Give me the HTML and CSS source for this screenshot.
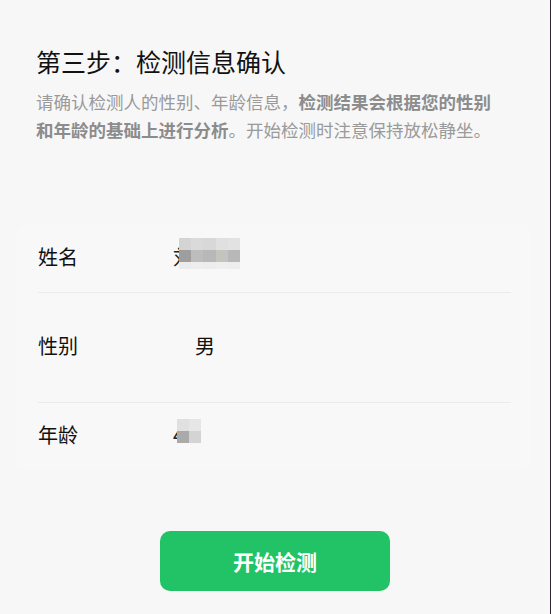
FILE: index.html
```html
<!DOCTYPE html>
<html lang="zh-CN">
<head>
<meta charset="utf-8">
<title>检测信息确认</title>
<link rel="stylesheet" href="styles.css">
</head>
<body>
<div class="page">
  <header class="intro">
    <h1 class="title">第三步：检测信息确认</h1>
    <p class="desc">请确认检测人的性别、年龄信息，<b class="strong">检测结果会根据您的性别</b><b class="strong">和年龄的基础上进行分析</b>。开始检测时注意保持放松静坐。</p>
  </header>

  <section class="card">
    <div class="row">
      <span class="label">姓名</span>
      <span class="value masked">刘<span class="mosaic mosaic-name">
        <i style="background:#d4d4d4"></i><i style="background:#dadada"></i><i style="background:#d8d8d8"></i><i style="background:#e0e0e0"></i><i style="background:#e2e2e2"></i>
        <i style="background:#9e9e9e"></i><i style="background:#bdbdbd"></i><i style="background:#b6b8ba"></i><i style="background:#c4c4bf"></i><i style="background:#b8b8b8"></i>
        <i style="background:#ececec"></i><i style="background:#eeeeee"></i><i style="background:#ededed"></i><i style="background:#efefef"></i><i style="background:#eeeeee"></i>
      </span></span>
    </div>
    <div class="row row-tall">
      <span class="label">性别</span>
      <span class="value gender">男</span>
    </div>
    <div class="row">
      <span class="label">年龄</span>
      <span class="value masked">4<span class="mosaic mosaic-age">
        <i style="background:#e0e0e0"></i><i style="background:#e6e6e6"></i>
        <i style="background:#aaaaaa"></i><i style="background:#d4d4d4"></i>
      </span></span>
    </div>
  </section>

  <div class="actions">
    <button class="start-btn" type="button">开始检测</button>
  </div>
</div>
</body>
</html>
```

FILE: styles.css
```css
html {
  background: #2e2430;
}
body {
  margin: 0;
  width: 550px;
  min-height: 614px;
  background: #f7f7f7;
  font-family: "Noto Sans CJK SC", "Noto Sans", sans-serif;
  color: #111;
}
.page {
  display: flex;
  flex-direction: column;
  padding: 44px 0 0;
}
.intro {
  padding: 0 36px;
}
.title {
  margin: 0;
  font-size: 25px;
  line-height: 35px;
  font-weight: 400;
  color: #111;
}
.desc {
  margin: 9px 0 0;
  max-width: 462px;
  font-size: 17.5px;
  line-height: 27.5px;
  color: #9a9a9a;
}
.strong {
  font-weight: 700;
  color: #8c8c8c;
}
.card {
  margin: 81px 20px 0 17px;
  background: #f8f8f8;
  border-radius: 10px;
  padding: 0 19px 0 21px;
  display: flex;
  flex-direction: column;
}
.row {
  display: flex;
  align-items: center;
  box-sizing: border-box;
  height: 68px;
  padding-bottom: 4px;
  font-size: 20px;
  color: #111;
}
.row + .row {
  border-top: 1px solid #ebebeb;
}
.row-tall {
  height: 110px;
}
.label {
  width: 135px;
  flex: none;
}
.value {
  position: relative;
}
.gender {
  padding-left: 22px;
}
.masked {
  color: #222;
}
.mosaic {
  position: absolute;
  top: -4px;
  left: 6px;
  display: grid;
  grid-template-rows: 12px 12px 7px;
}
.mosaic-name {
  grid-template-columns: repeat(5, 12.2px);
}
.mosaic-age {
  top: -1px;
  left: 4px;
  grid-template-columns: repeat(2, 12px);
  grid-template-rows: 12px 12px;
}
.mosaic i {
  display: block;
}
.actions {
  display: flex;
  justify-content: center;
  margin-top: 61px;
}
.start-btn {
  width: 230px;
  height: 60px;
  border: none;
  border-radius: 10px;
  background: #22c366;
  color: #fff;
  font-family: "Noto Sans CJK SC", "Noto Sans", sans-serif;
  font-size: 21px;
  font-weight: 700;
  cursor: pointer;
}
```
